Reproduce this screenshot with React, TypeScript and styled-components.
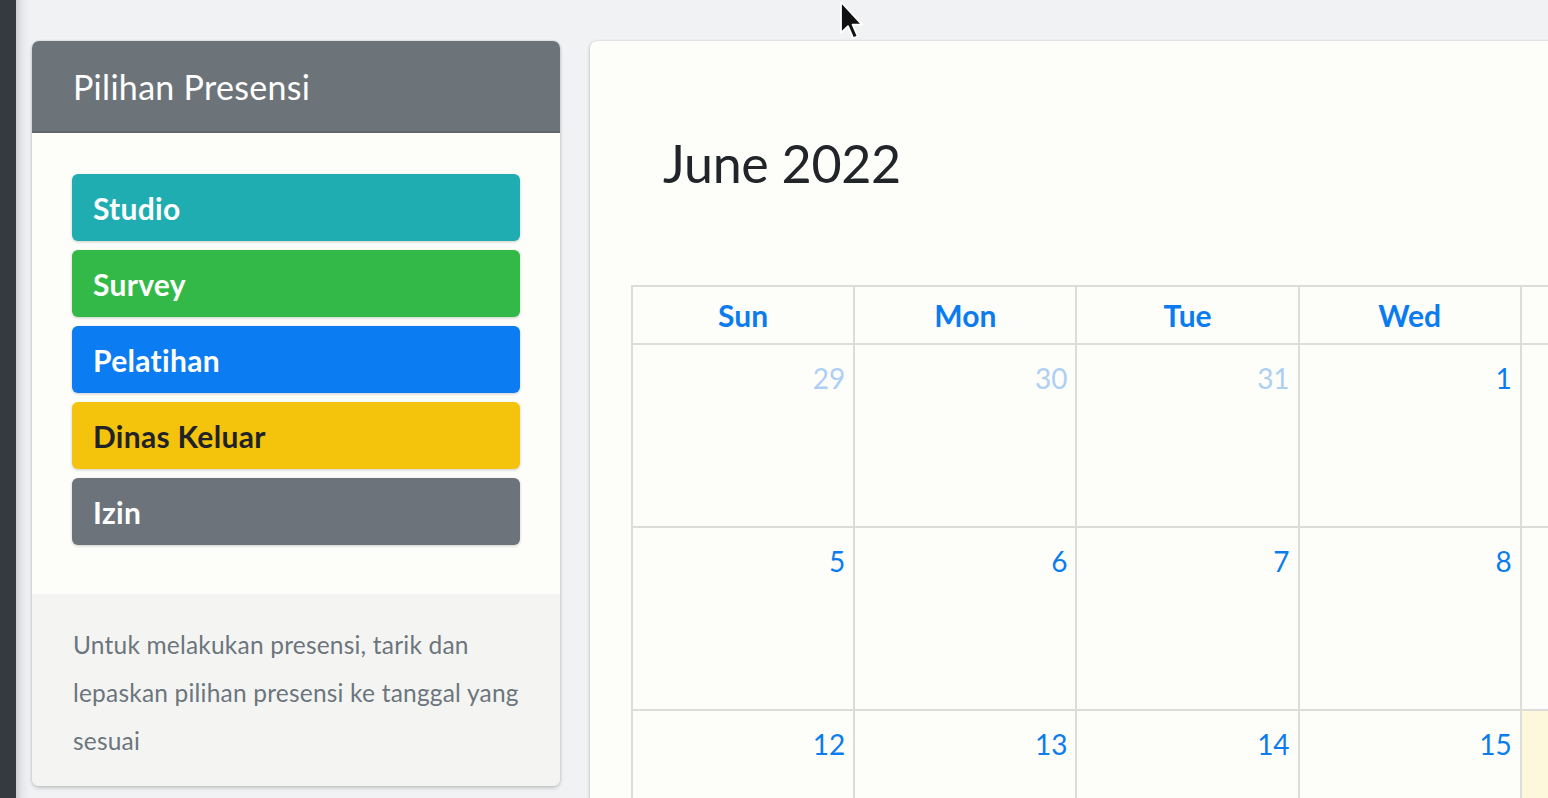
import React from "react";
import styled, { createGlobalStyle } from "styled-components";

const Global = createGlobalStyle`
  html, body { margin: 0; padding: 0; }
  body {
    background: #f1f2f3;
    font-family: "Lato", "Noto Sans", sans-serif;
    overflow: hidden;
    width: 1548px;
    height: 798px;
  }
`;

const Page = styled.div`
  display: flex;
  height: 798px;
  overflow: hidden;
  position: relative;
`;

const Sidebar = styled.div`
  flex: 0 0 16px;
  background: #343a40;
`;

const Content = styled.div`
  flex: 1;
  display: flex;
  align-items: flex-start;
  gap: 30px;
  padding: 41px 0 0 16px;
  background: linear-gradient(to right, #cdcecf 0px, #e6e7e8 6px, #f1f2f3 14px);
  overflow: hidden;
`;

const Card = styled.div`
  flex: 0 0 528px;
  border-radius: 7px;
  overflow: hidden;
  background: #fdfefa;
  box-shadow: 0 0 2px rgba(0, 0, 0, 0.18), 0 2px 4px rgba(0, 0, 0, 0.18);
`;

const CardHeader = styled.div`
  background: #6c747a;
  border-bottom: 2px solid #5e656b;
  display: flex;
  align-items: center;
  padding-left: 41px;
  box-sizing: border-box;
  height: 92px;
`;

const HeaderTitle = styled.h3`
  margin: 0;
  color: #ffffff;
  font-size: 34px;
  font-weight: 400;
  letter-spacing: 0.3px;
`;

const CardBody = styled.div`
  padding: 41px 40px 49px;
  display: flex;
  flex-direction: column;
  gap: 9px;
`;

const Chip = styled.div<{ $bg: string; $fg: string }>`
  height: 67px;
  border-radius: 6px;
  background: ${(p) => p.$bg};
  color: ${(p) => p.$fg};
  display: flex;
  align-items: center;
  padding-left: 21px;
  font-size: 30px;
  font-weight: 700;
  letter-spacing: 0.3px;
  box-shadow: 0 1px 3px rgba(0, 0, 0, 0.2);
  cursor: move;
`;

const CardFooter = styled.div`
  background: #f4f5f2;
  padding: 27px 41px 21px;
  color: #6c757d;
  font-size: 24.5px;
  line-height: 48px;
  letter-spacing: 0.2px;
`;

const CalendarCard = styled.div`
  flex: 0 0 1700px;
  height: 800px;
  border-radius: 7px;
  background: #fdfefa;
  box-shadow: 0 0 2px rgba(0, 0, 0, 0.18), 0 2px 4px rgba(0, 0, 0, 0.18);
  padding: 0 0 0 41px;
  box-sizing: border-box;
`;

const Toolbar = styled.div`
  height: 244px;
  display: flex;
  align-items: center;
  padding-left: 32px;
`;

const MonthTitle = styled.h2`
  margin: 0;
  font-size: 52px;
  font-weight: 400;
  color: #212529;
  letter-spacing: -0.3px;
`;

const Table = styled.table`
  border-collapse: collapse;
  table-layout: fixed;
  width: ${222.5 * 7}px;
`;

const HeadCell = styled.th`
  height: 56px;
  border: 2px solid #dcdcd8;
  color: #0b7cf0;
  font-size: 30px;
  font-weight: 700;
  text-align: center;
  padding: 0;
  vertical-align: middle;
`;

const DayCell = styled.td<{ $today?: boolean }>`
  height: 183px;
  border: 2px solid #dcdcd8;
  background: ${(p) => (p.$today ? "#fdf7dc" : "transparent")};
  vertical-align: top;
  text-align: right;
  padding: 16px 8px 0 0;
  box-sizing: border-box;
`;

const DayNum = styled.span<{ $other?: boolean }>`
  font-size: 28px;
  color: ${(p) => (p.$other ? "#aecff4" : "#0b7cf0")};
`;

const Cursor = styled.svg`
  position: absolute;
  left: 840px;
  top: 1px;
`;

const chips = [
  { label: "Studio", bg: "#20adb2", fg: "#ffffff" },
  { label: "Survey", bg: "#33b947", fg: "#ffffff" },
  { label: "Pelatihan", bg: "#0b7cf1", fg: "#ffffff" },
  { label: "Dinas Keluar", bg: "#f4c40d", fg: "#1f2328" },
  { label: "Izin", bg: "#6c737a", fg: "#ffffff" },
];

const days = ["Sun", "Mon", "Tue", "Wed", "Thu", "Fri", "Sat"];

const weeks: { n: number; other?: boolean; today?: boolean }[][] = [
  [
    { n: 29, other: true },
    { n: 30, other: true },
    { n: 31, other: true },
    { n: 1 },
    { n: 2 },
    { n: 3 },
    { n: 4 },
  ],
  [5, 6, 7, 8, 9, 10, 11].map((n) => ({ n })),
  [12, 13, 14, 15, 16, 17, 18].map((n) => ({ n, today: n === 16 })),
];

export default function App() {
  return (
    <>
      <Global />
      <Page>
        <Sidebar />
        <Content>
          <Card>
            <CardHeader>
              <HeaderTitle>Pilihan Presensi</HeaderTitle>
            </CardHeader>
            <CardBody>
              {chips.map((c) => (
                <Chip key={c.label} $bg={c.bg} $fg={c.fg}>
                  {c.label}
                </Chip>
              ))}
            </CardBody>
            <CardFooter>
              Untuk melakukan presensi, tarik dan lepaskan pilihan presensi ke
              tanggal yang sesuai
            </CardFooter>
          </Card>
          <CalendarCard>
            <Toolbar>
              <MonthTitle>June 2022</MonthTitle>
            </Toolbar>
            <Table>
              <thead>
                <tr>
                  {days.map((d) => (
                    <HeadCell key={d}>{d}</HeadCell>
                  ))}
                </tr>
              </thead>
              <tbody>
                {weeks.map((w, i) => (
                  <tr key={i}>
                    {w.map((d) => (
                      <DayCell key={d.n} $today={d.today}>
                        <DayNum $other={d.other}>{d.n}</DayNum>
                      </DayCell>
                    ))}
                  </tr>
                ))}
              </tbody>
            </Table>
          </CalendarCard>
        </Content>
        <Cursor width="24" height="40" viewBox="0 0 12 20">
          <path
            d="M0.5 0.5 L0.5 16 L4 12.6 L6.6 18.6 L8.8 17.6 L6.3 11.8 L11 11.8 Z"
            fill="#111"
            stroke="#fff"
            strokeWidth="0.9"
            strokeLinejoin="round"
          />
        </Cursor>
      </Page>
    </>
  );
}
